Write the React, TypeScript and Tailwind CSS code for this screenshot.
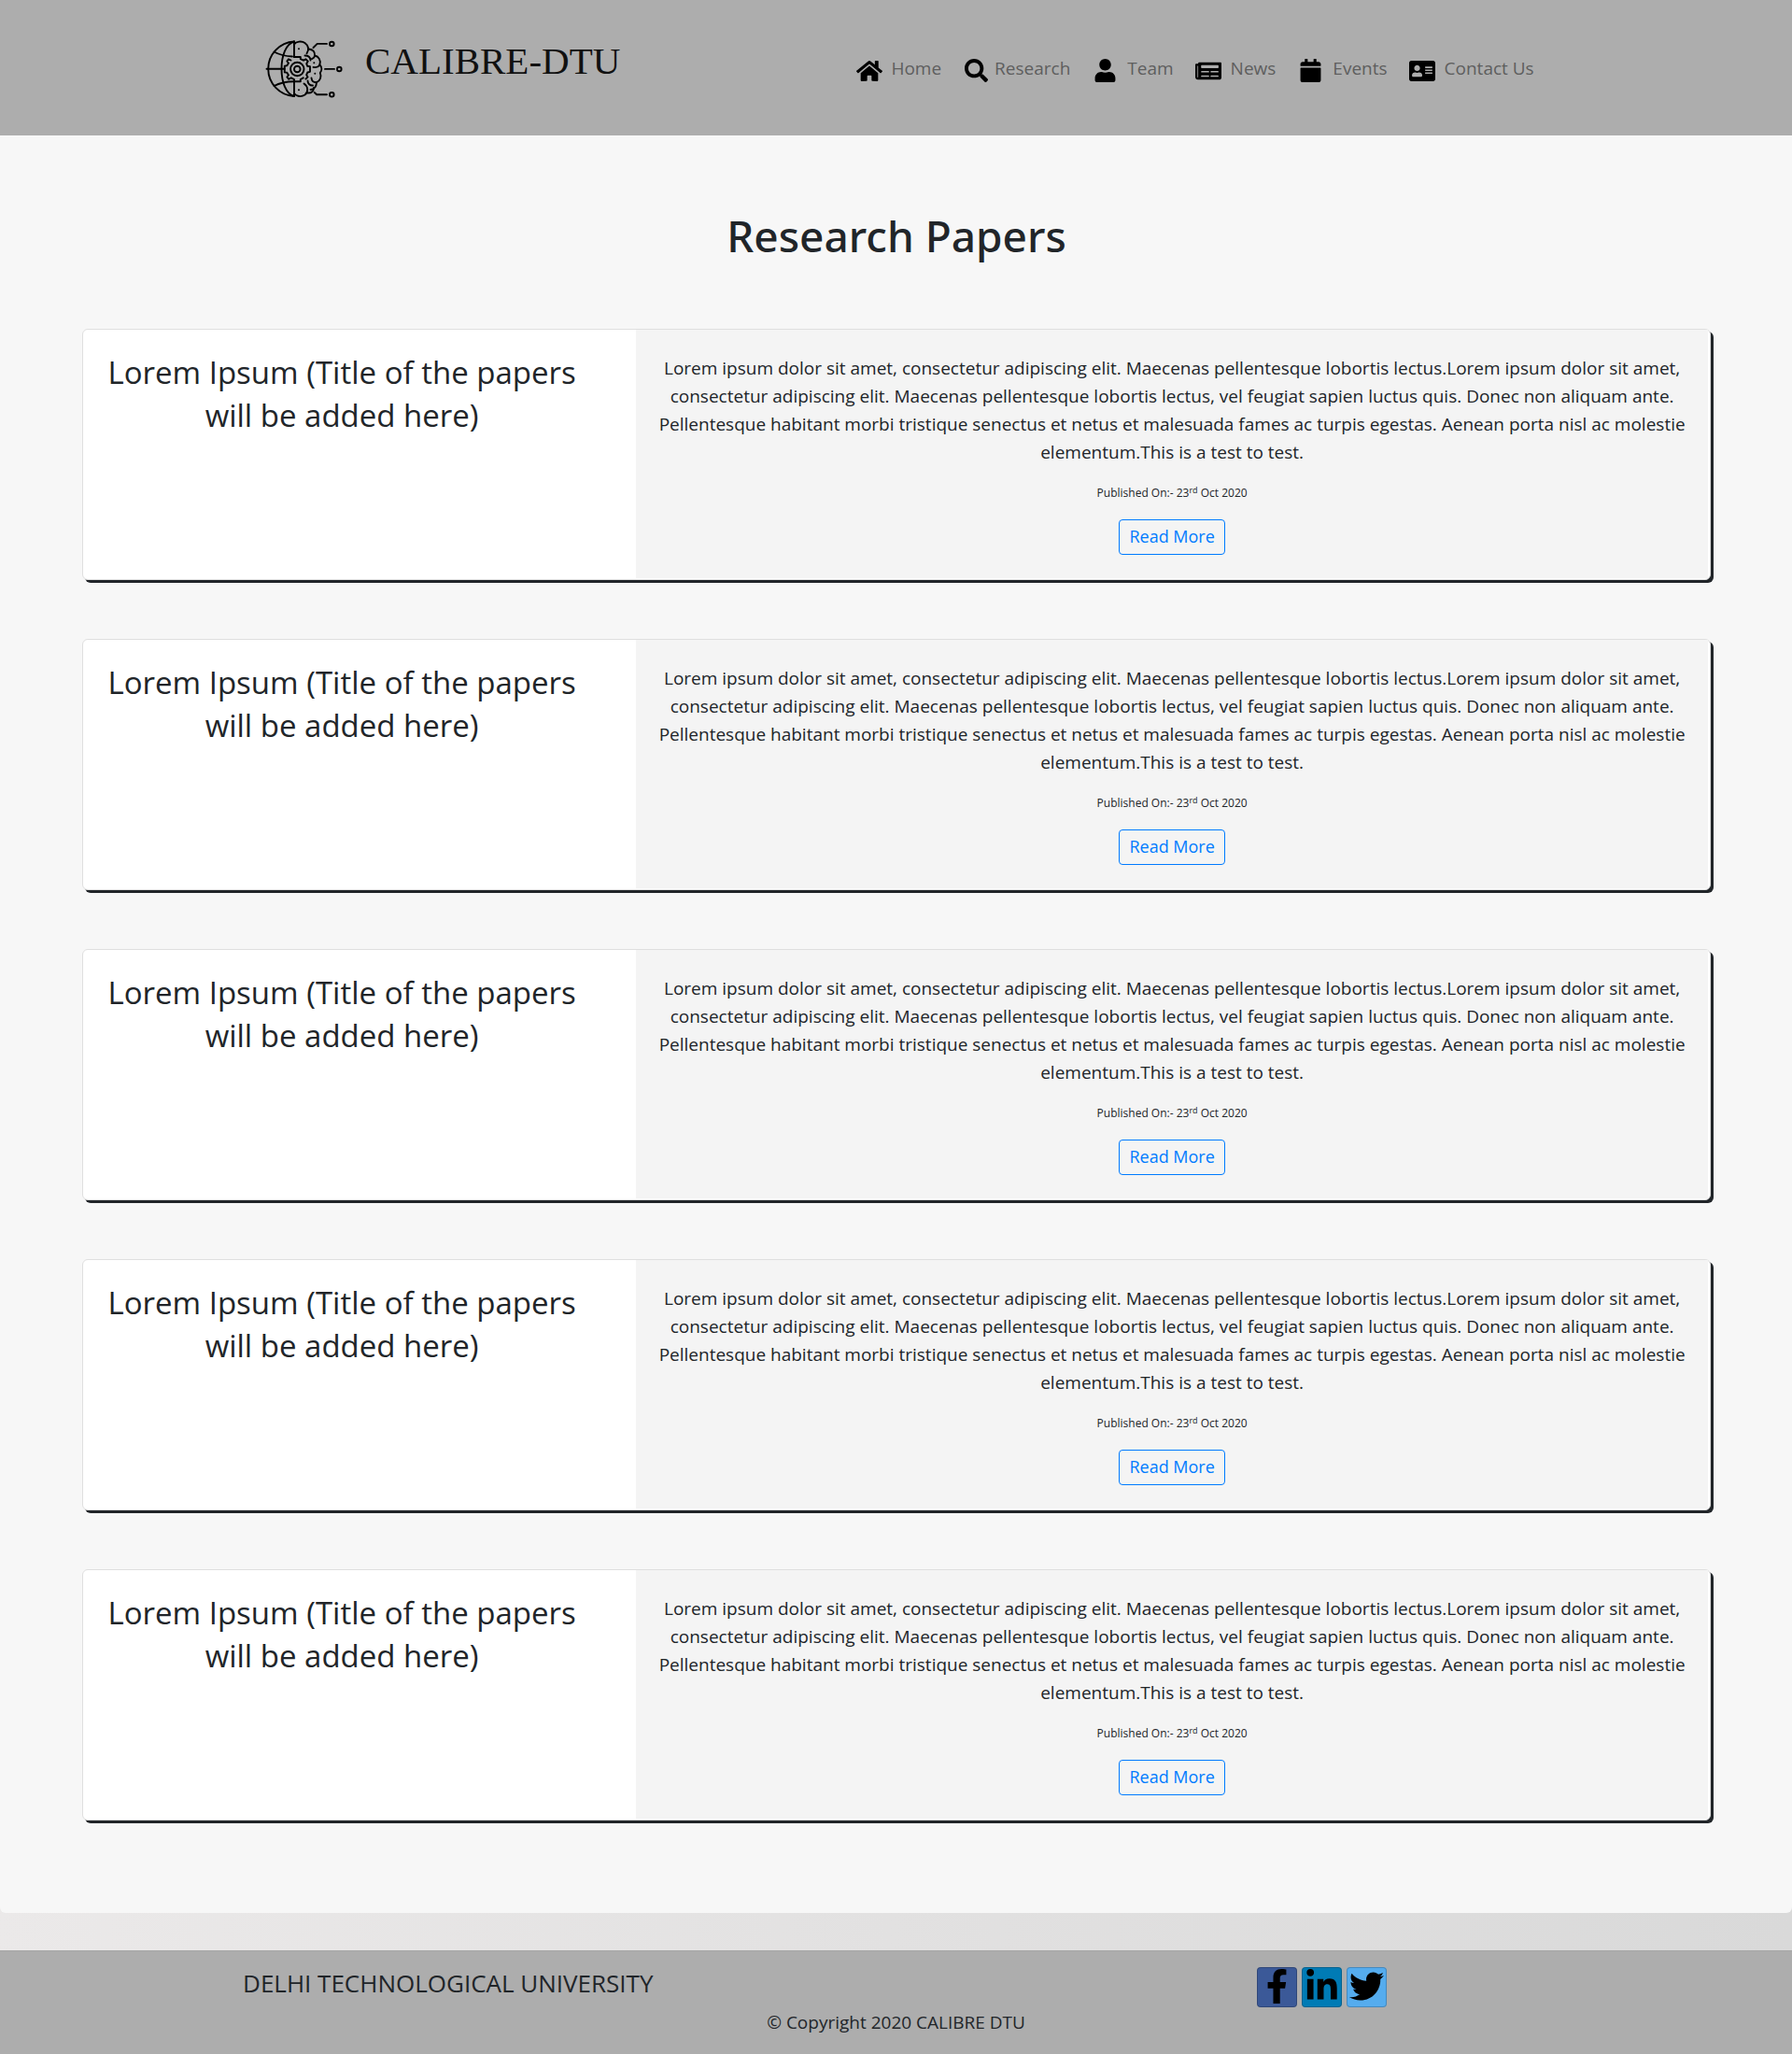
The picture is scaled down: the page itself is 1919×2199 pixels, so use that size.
import React from "react";
import type { IconType } from "react-icons";
import {
  FaHome,
  FaSearch,
  FaUser,
  FaNewspaper,
  FaCalendar,
  FaAddressCard,
  FaFacebookF,
  FaLinkedinIn,
  FaTwitter,
} from "react-icons/fa";

const navItems: { label: string; icon: IconType; size: string; gap: string }[] = [
  { label: "Home", icon: FaHome, size: "size-7", gap: "gap-2" },
  { label: "Research", icon: FaSearch, size: "size-[25px]", gap: "gap-1" },
  { label: "Team", icon: FaUser, size: "size-[25px]", gap: "gap-2" },
  { label: "News", icon: FaNewspaper, size: "size-7", gap: "gap-2" },
  { label: "Events", icon: FaCalendar, size: "size-[25px]", gap: "gap-2" },
  { label: "Contact Us", icon: FaAddressCard, size: "size-7", gap: "gap-2" },
];

const socials: { label: string; icon: IconType; color: string }[] = [
  { label: "Facebook", icon: FaFacebookF, color: "bg-[#3b5998]" },
  { label: "LinkedIn", icon: FaLinkedinIn, color: "bg-[#007bb5]" },
  { label: "Twitter", icon: FaTwitter, color: "bg-[#55acee]" },
];

const papers = [1, 2, 3, 4, 5];

function Logo() {
  return (
    <svg
      viewBox="0 0 84 62"
      className="h-[62px] w-[84px] shrink-0"
      fill="none"
      stroke="#000"
      strokeWidth="1.9"
      strokeLinecap="round"
      strokeLinejoin="round"
      aria-hidden="true"
    >
      {/* globe */}
      <path d="M31 1.5A29.5 29.3 0 0 0 31 60" />
      <path d="M31 1.5C22 4 17.5 17 17.5 30.7S22 57.500 31 60" />
      <path d="M31 1.500V18M31 43.500V60M1.500 30.700H20.500" />
      <path d="M9.500 12.500C16 16 22 17.200 29 17.500M9.500 49C16 45.500 22 44.300 31 44.200" />
      {/* gear */}
      <circle cx="34.300" cy="31" r="3.300" />
      <circle cx="34.300" cy="31" r="7.200" />
      <path d="M27.500 21.500L25 20.300L23.300 22.500L25 24.600L23.300 27.300L20.800 27.600V34.400L23.300 34.700L25 37.400L23.300 39.500L25.300 41.800L27.800 40.300L31 42V44.200H37.800V42L40.800 40.300" />
      <path d="M31 18H37.800V20.200L41 21.700L43.500 20.300L45.800 22.600L44.200 25.200L45.300 27.800L48 28.300V33.800L45.300 34.500L44.200 37.200L45.600 39.400L43.400 41.500" />
      {/* brain */}
      <path d="M31 4.500C33 1.200 39 0.500 42.500 3C46.500 5.800 47.200 10.500 44.500 14.200" />
      <path d="M46.800 9.500C51 10 53.500 12.500 53 16.500C57.500 17.500 59.500 21.500 58.500 25.500C58 28 55 29.500 51.500 29" />
      <path d="M42.500 16.500C46 16.500 48.300 18.300 48.500 21.500M53 16.500C52.800 18.300 51.500 19.500 50 20" />
      <path d="M58.500 26.500C61 29 60.800 32.500 58.800 35C60.500 39 59 43.500 55 45.200C54.800 49.500 52.500 52.500 48.500 53" />
      <path d="M49.500 40.500C49.800 43.500 52 45.300 55 45.200M45.500 43.500C45.500 46.500 48 48.800 51 48.500" />
      <path d="M41.500 46.500C46 49.500 46.500 55.500 42.500 58.500C38.500 61.300 33.500 60.200 31 57M45.500 56.500C49.500 57 52 54.500 52 51" />
      <g fill="#000" stroke="none">
        <circle cx="36" cy="9.300" r="1" />
        <circle cx="52.300" cy="24.300" r="1" />
        <circle cx="53.300" cy="35.700" r="1" />
        <circle cx="36" cy="53.300" r="1" />
      </g>
      {/* circuit leads */}
      <path d="M51.500 8L55.700 3.900H66M64 30.900H74M52.700 56L55.200 58.300H66" />
      <circle cx="71.300" cy="4" r="2.300" />
      <circle cx="79.300" cy="31" r="2.300" />
      <circle cx="71.300" cy="58.300" r="2.300" />
    </svg>
  );
}

function PaperCard() {
  return (
    <article className="grid grid-cols-[34%_66%] rounded-md border border-[#dfdfdf] bg-white text-center shadow-[3px_3px_0_#212529]">
      <h2 className="pt-[23px] pr-[58px] pl-5 text-[33px] leading-[46px]">
        Lorem Ipsum (Title of the papers will be added here)
      </h2>
      <div className="mr-0.5 mb-px bg-[#f4f4f4] px-5 pt-[26px] pb-[25px]">
        <p className="text-[19px] leading-[30px]">
          Lorem ipsum dolor sit amet, consectetur adipiscing elit. Maecenas pellentesque lobortis
          lectus.Lorem ipsum dolor sit amet, consectetur adipiscing elit. Maecenas pellentesque
          lobortis lectus, vel feugiat sapien luctus quis. Donec non aliquam ante. Pellentesque
          habitant morbi tristique senectus et netus et malesuada fames ac turpis egestas. Aenean
          porta nisl ac molestie elementum.This is a test to test.
        </p>
        <p className="mt-5 mb-[19px] text-xs leading-[18px]">
          Published On:- 23<sup>rd</sup> Oct 2020
        </p>
        <button
          type="button"
          className="mx-auto block h-[38px] rounded border border-[#007bff] px-2.5 pb-0.5 text-lg text-[#007bff]"
        >
          Read More
        </button>
      </div>
    </article>
  );
}

export default function App() {
  return (
    <div className="bg-linear-to-r from-[#ebe9e9] to-[#d9d9d9] font-['Open_Sans','Noto_Sans',sans-serif] text-[#212529]">
      <header className="flex min-h-[145px] items-start justify-between bg-[#adadad] pt-[43px] pr-[14.4%] pl-[14.8%]">
        <a href="#" className="flex items-start gap-[23px] text-[#111]">
          <Logo />
          <span className="font-['Liberation_Serif',serif] text-[41px] leading-[44px]">
            CALIBRE-DTU
          </span>
        </a>
        <nav className="mt-[15px] flex gap-[22px]">
          {navItems.map(({ label, icon: Icon, size, gap }) => (
            <a
              key={label}
              href="#"
              className={`flex items-center text-[19px] leading-[30px] whitespace-nowrap text-[#5e5e5e] ${gap}`}
            >
              <span className="flex h-[30px] w-[31px] items-center justify-center pt-[5px] text-black">
                <Icon className={`shrink-0 ${size}`} aria-hidden="true" />
              </span>
              {label}
            </a>
          ))}
        </nav>
      </header>

      <main className="rounded-b-md bg-[#f7f7f7] pt-[79px] pr-[87px] pb-[99px] pl-[88px]">
        <h1 className="text-center font-['Noto_Sans',sans-serif] text-[46px] leading-[56px] font-medium">
          Research Papers
        </h1>
        <div className="mt-[72px] flex flex-col gap-[63px]">
          {papers.map((id) => (
            <PaperCard key={id} />
          ))}
        </div>
      </main>

      <footer className="mt-10 border-t border-[#a6a6a6] bg-[#adadad] pt-[17px] pb-5">
        <div className="grid h-[45px] grid-cols-2">
          <h2 className="text-center text-[26px] leading-[34px]">DELHI TECHNOLOGICAL UNIVERSITY</h2>
          <div className="flex justify-center gap-[5px] pr-12">
            {socials.map(({ label, icon: Icon, color }) => (
              <a
                key={label}
                href="#"
                aria-label={label}
                className={`flex size-[43px] justify-center rounded border border-black/20 pt-px text-[37px] text-black ${color}`}
              >
                <Icon aria-hidden="true" />
              </a>
            ))}
          </div>
        </div>
        <p className="text-center text-[19px] leading-7">© Copyright 2020 CALIBRE DTU</p>
      </footer>
    </div>
  );
}
